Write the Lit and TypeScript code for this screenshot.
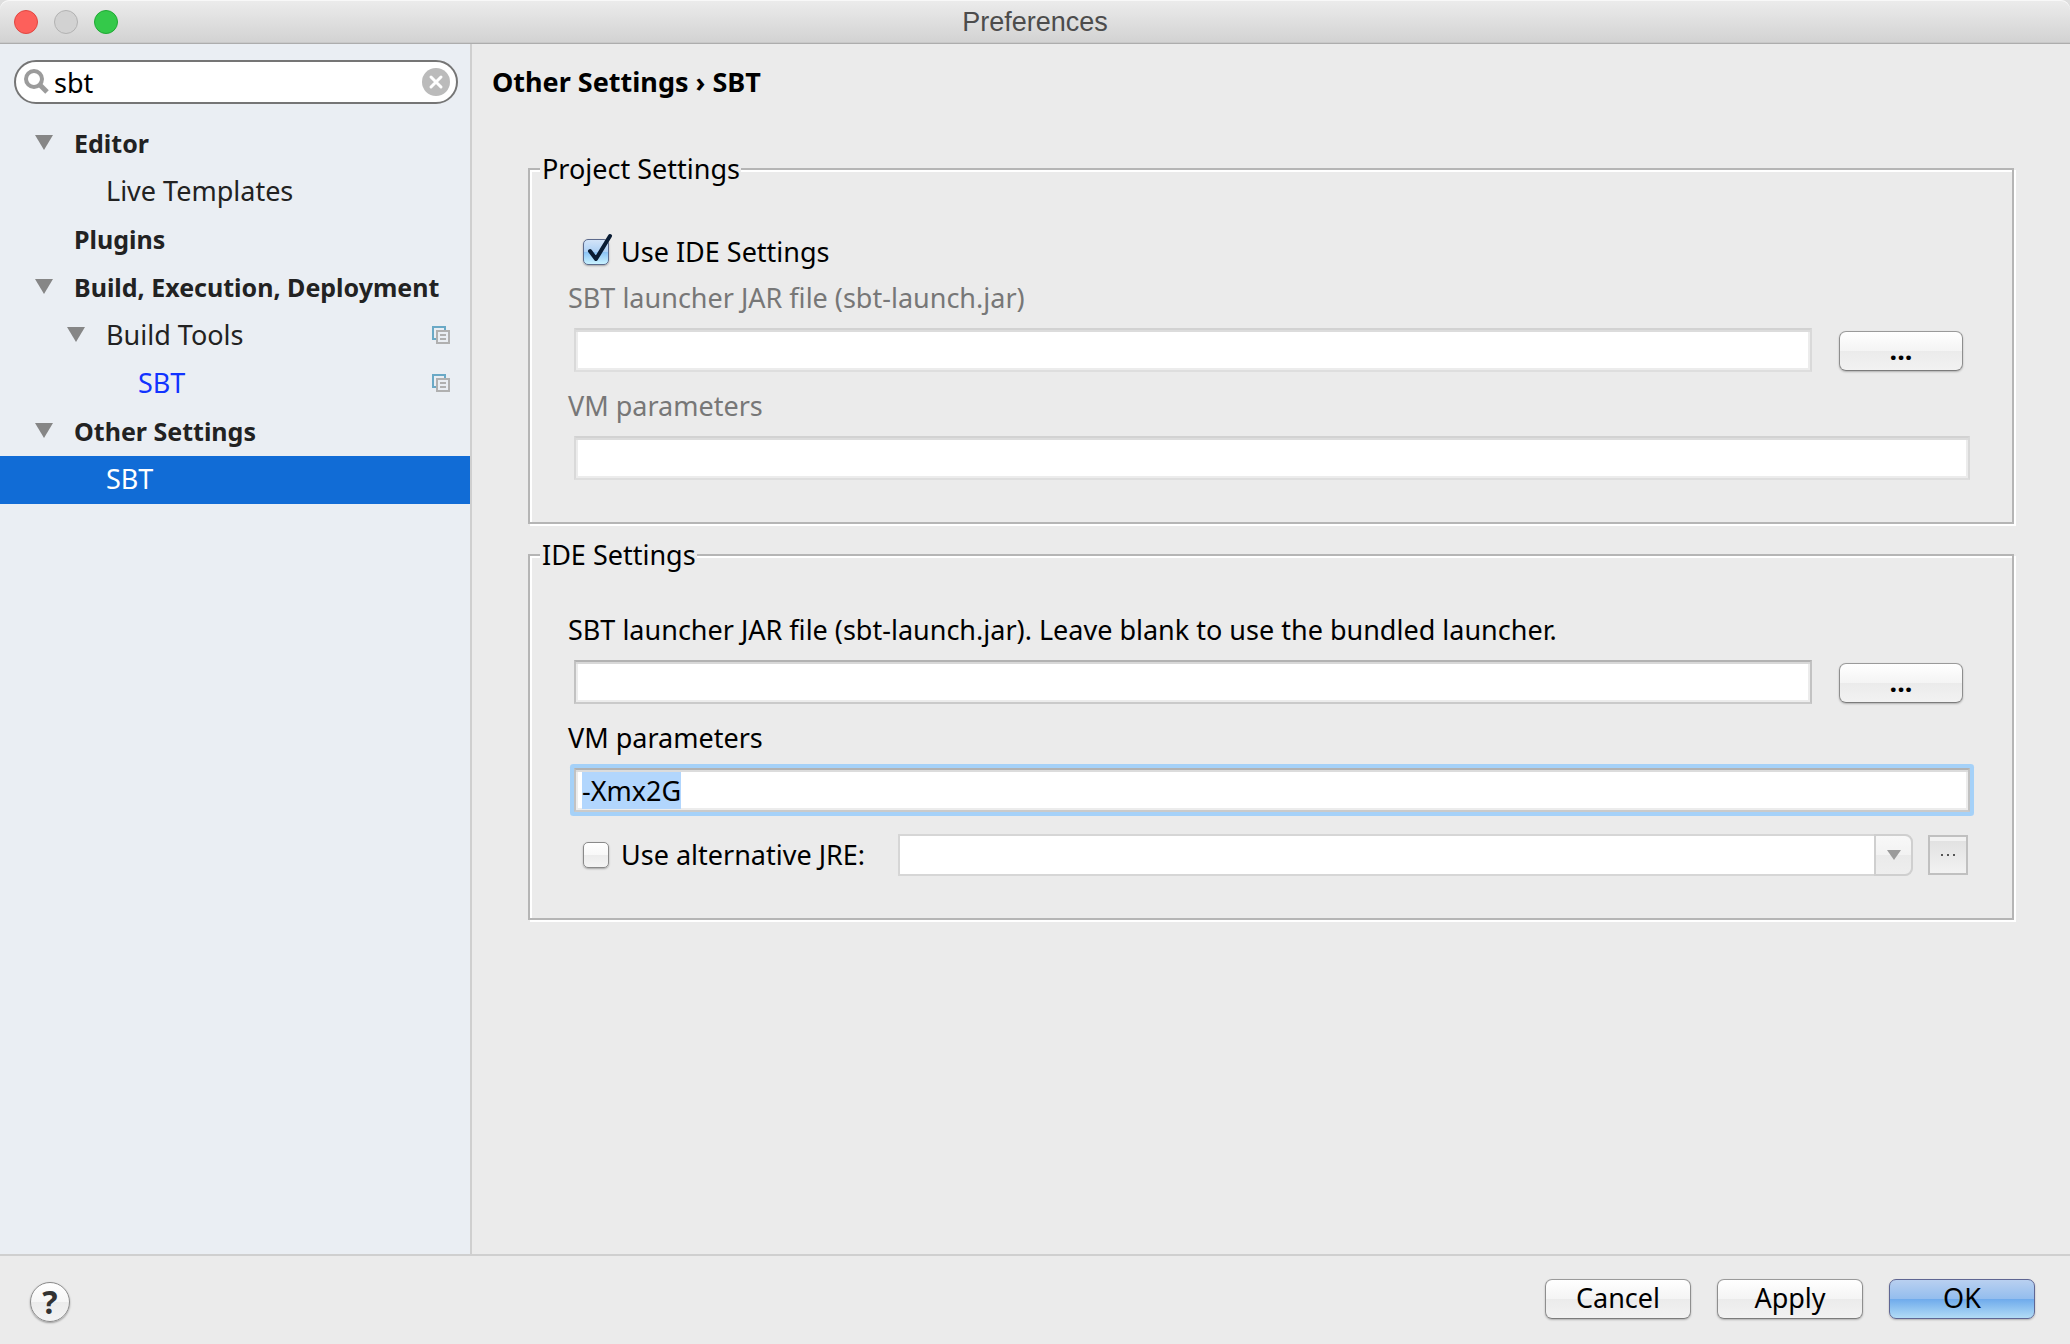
import { LitElement, html, css, nothing } from "lit";
import { customElement, query, state } from "lit/decorators.js";
import { classMap } from "lit/directives/class-map.js";

interface TreeRow {
  id: string;
  label: string;
  level: 0 | 1 | 2;
  expandable?: boolean;
  group?: boolean;
  match?: boolean;
  shared?: boolean;
}

const ROWS: TreeRow[] = [
  { id: "editor", label: "Editor", level: 0, expandable: true, group: true },
  { id: "templates", label: "Live Templates", level: 1 },
  { id: "plugins", label: "Plugins", level: 0, group: true },
  { id: "build", label: "Build, Execution, Deployment", level: 0, expandable: true, group: true },
  { id: "tools", label: "Build Tools", level: 1, expandable: true, shared: true },
  { id: "tools-sbt", label: "SBT", level: 2, match: true, shared: true },
  { id: "other", label: "Other Settings", level: 0, expandable: true, group: true },
  { id: "other-sbt", label: "SBT", level: 1 },
];

const arrow = html`<svg width="18" height="15" viewBox="0 0 18 15" aria-hidden="true">
  <path d="M0 0h18L9 15z" fill="#868686" />
</svg>`;

const copies = html`<svg width="18" height="18" viewBox="0 0 18 18" fill="none" stroke-width="2" aria-hidden="true">
  <path d="M4 13H1V1h12v3" stroke="#6aa9c6" />
  <path d="M5 5h12v12H5z" stroke="#b0b0b0" />
  <path d="M8 9h6M8 13h6" stroke="#b0b0b0" />
</svg>`;

@customElement("app-root")
export class AppRoot extends LitElement {
  @state() private selected = "other-sbt";
  @state() private useIde = true;
  @state() private useJre = false;
  @query("#ide-vm") private vmField!: HTMLInputElement;

  static styles = css`
    :host {
      display: flex;
      flex-direction: column;
      min-height: 100vh;
      background: #ebebeb;
      color: #000;
      font: 27px/32px "Noto Sans", "Open Sans", sans-serif;
    }
    * {
      box-sizing: border-box;
    }
    button,
    input,
    select {
      font: inherit;
      color: inherit;
      margin: 0;
      outline: none;
    }
    .titleframe {
      background: #dedede;
    }
    .titlebar {
      display: grid;
      grid-template-columns: 1fr auto 1fr;
      align-items: center;
      height: 44px;
      padding: 1px 14px 0;
      border-bottom: 1px solid #adadad;
      border-radius: 9px 9px 0 0;
      background: linear-gradient(#ececec, #d2d2d2);
      box-shadow: inset 0 1px #f8f8f8, inset 0 -1px #c8c8c8;
    }
    .lights {
      display: flex;
      gap: 16px;
    }
    .light {
      width: 24px;
      height: 24px;
      padding: 0;
      border: 1px solid;
      border-radius: 50%;
    }
    .close {
      background: #fd605b;
      border-color: #e14640;
    }
    .minimize {
      background: #d2d2d2;
      border-color: #b2b2b2;
    }
    .zoom {
      background: #34c94a;
      border-color: #1fa934;
    }
    h1 {
      margin: 0;
      font: 27px/32px "Liberation Sans", Arial, sans-serif;
      color: #4c4c4c;
    }
    .body {
      flex: 1;
      display: flex;
    }
    aside {
      width: 472px;
      flex: none;
      border-right: 2px solid #cfcfcf;
      background: #eaeef3;
    }
    .search {
      display: flex;
      align-items: center;
      height: 44px;
      margin: 16px 12px 16px 14px;
      padding: 0 6px 0 8px;
      border: 2px solid #757575;
      border-radius: 22px;
      background: #fff;
    }
    .search input {
      flex: 1;
      min-width: 0;
      height: 40px;
      padding: 0 0 0 4px;
      border: 0;
      background: none;
    }
    .clear {
      display: flex;
      padding: 0;
      border: 0;
      background: none;
    }
    ul {
      list-style: none;
      margin: 0;
      padding: 0;
    }
    .row {
      display: flex;
      align-items: center;
      width: 100%;
      height: 48px;
      padding: 0 20px 3px 35px;
      border: 0;
      background: none;
      color: #222;
      text-align: left;
    }
    .level1 {
      padding-left: 67px;
    }
    .level2 {
      padding-left: 99px;
    }
    .group {
      font-size: 25px;
      font-weight: 700;
    }
    .match {
      color: #1233ff;
    }
    .selected {
      background: #116cd6;
      color: #fff;
    }
    .twist {
      display: flex;
      flex: none;
      width: 39px;
    }
    .name {
      flex: 1;
      white-space: nowrap;
    }
    main {
      flex: 1;
      min-width: 0;
      padding: 22px 56px 40px 20px;
    }
    h2 {
      margin: 0 0 55px;
      font-size: 27px;
      font-weight: 700;
    }
    fieldset {
      min-width: 0;
      margin: 0 0 15px 36px;
      padding: 0 10px;
      border: 2px solid #b5b5b5;
      box-shadow: inset 2px 2px #fff, 2px 2px #fff;
    }
    legend {
      padding: 0 1px 0 2px;
      background: #ebebeb;
    }
    .group-body {
      display: flex;
      flex-direction: column;
      gap: 18px;
      padding: 43px 32px 42px 28px;
    }
    .group-body.project {
      padding-top: 51px;
    }
    .field {
      display: flex;
      flex-direction: column;
      gap: 14px;
    }
    .field.off label {
      color: #777;
    }
    .line {
      display: flex;
      align-items: center;
      gap: 27px;
      padding-left: 6px;
    }
    .line.browse {
      padding-right: 7px;
    }
    .text {
      flex: 1;
      min-width: 0;
      height: 44px;
      padding: 0 6px;
      border: 2px solid;
      border-color: #b2b2b2 #c2c2c2 #cacaca;
      border-radius: 0;
      background: #fff;
      background-clip: padding-box;
      box-shadow: inset 0 2px #d8d8d8, inset 2px -2px #ececec, inset -2px 0 #ececec;
    }
    .text:disabled {
      border-color: #d2d2d2 #d9d9d9 #dedede;
      box-shadow: inset 0 2px #dcdcdc, inset 2px -2px #ececec, inset -2px 0 #ececec;
    }
    .text.focus {
      border-radius: 1px;
      box-shadow: 0 0 0 4px #a5d1f8, inset 0 2px #dcdcdc, inset 2px -2px #ececec, inset -2px 0 #ececec;
    }
    .text::selection {
      background: #b2d6fd;
      color: #000;
    }
    .check {
      display: flex;
      align-items: center;
      gap: 12px;
      padding-left: 15px;
    }
    .check.switch {
      margin-bottom: -4px;
    }
    .tick {
      position: relative;
      display: flex;
    }
    .tick input {
      appearance: none;
      width: 26px;
      height: 26px;
      border: 1px solid #8a8a8a;
      border-radius: 5px;
      background: linear-gradient(#fff, #f8f8f8 50%, #ececec 50%, #f4f4f4);
      box-shadow: 0 1px 2px #0000004d;
    }
    .tick input:checked {
      border-color: #5c6a8c;
      background: linear-gradient(#d3e4f8, #acd0f5 50%, #8ac2f5 50%, #c9f2ff);
    }
    .tick svg {
      position: absolute;
      left: 0;
      bottom: 0;
      pointer-events: none;
    }
    .push {
      height: 40px;
      padding: 0 0 2px;
      border: 1px solid;
      border-color: #9a9a9a #8e8e8e #7c7c7c;
      border-radius: 7px;
      background: linear-gradient(#fff, #f4f4f4 50%, #ebebeb 50%, #f2f2f2);
      box-shadow: 0 1px 2px #00000040;
    }
    .browse .push {
      width: 124px;
      margin-top: 2px;
      font-weight: 700;
    }
    .jre {
      display: flex;
      align-items: center;
      height: 42px;
      margin-top: 4px;
      padding-right: 2px;
    }
    .combo {
      position: relative;
      flex: 1;
      display: flex;
      margin: 0 15px 0 33px;
    }
    .combo select {
      appearance: none;
      width: 100%;
      height: 42px;
      border: 2px solid #d6d6d6;
      border-radius: 0 9px 9px 0;
      background: #fff;
      opacity: 1;
    }
    .drop {
      position: absolute;
      top: 0;
      right: 0;
      display: flex;
      align-items: center;
      justify-content: center;
      width: 39px;
      height: 42px;
      border: 2px solid #cfcfcf;
      border-radius: 0 8px 8px 0;
      background: linear-gradient(#f8f8f8, #f2f2f2 50%, #eaeaea 50%, #eee);
      pointer-events: none;
    }
    .more {
      display: flex;
      align-items: center;
      justify-content: center;
      width: 40px;
      height: 40px;
      padding: 0;
      border: 2px solid #c0c0c0;
      background: linear-gradient(#f2f2f2 10%, #e2e2e2 12%, #f2f2f2);
    }
    footer {
      display: flex;
      align-items: flex-start;
      gap: 26px;
      height: 90px;
      padding: 23px 35px 0 30px;
      border-top: 2px solid #cfcfcf;
    }
    .help {
      width: 40px;
      height: 40px;
      margin: 3px auto 0 0;
      padding: 0;
      border: 1px solid #8a8a8a;
      border-radius: 50%;
      background: linear-gradient(#fff, #f6f6f6 50%, #ebebeb 50%, #f4f4f4);
      box-shadow: 0 1px 2px #00000059;
      color: #333;
      font-size: 32px;
      font-weight: 700;
    }
    footer .push {
      width: 146px;
    }
    footer .primary {
      border-color: #5f6693;
      background: linear-gradient(#b9d0f0, #93bdee 50%, #6eaaec 50%, #b2dcf5);
    }
  `;

  firstUpdated() {
    this.vmField.focus();
    this.vmField.select();
  }

  private row(r: TreeRow) {
    const classes = {
      row: true,
      level1: r.level === 1,
      level2: r.level === 2,
      group: !!r.group,
      match: !!r.match,
      selected: r.id === this.selected,
    };
    return html`<li>
      <button class=${classMap(classes)} @click=${() => (this.selected = r.id)}>
        <span class="twist">${r.expandable ? arrow : nothing}</span>
        <span class="name">${r.label}</span>
        ${r.shared ? copies : nothing}
      </button>
    </li>`;
  }

  private checkbox(id: string, label: string, on: boolean, set: (v: boolean) => void) {
    return html`<span class="tick">
        <input id=${id} type="checkbox" .checked=${on}
          @change=${(e: Event) => set((e.target as HTMLInputElement).checked)} />
        ${on
          ? html`<svg width="32" height="32" viewBox="0 0 32 32" aria-hidden="true">
              <path d="M7 18l6 8L27 3" fill="none" stroke="#0a1c33" stroke-width="4" stroke-linecap="round" stroke-linejoin="round" />
            </svg>`
          : nothing}
      </span>
      <label for=${id}>${label}</label>`;
  }

  render() {
    return html`
      <div class="titleframe">
        <header class="titlebar">
          <div class="lights">
            <button class="light close" aria-label="Close"></button>
            <button class="light minimize" aria-label="Minimize" disabled></button>
            <button class="light zoom" aria-label="Zoom"></button>
          </div>
          <h1>Preferences</h1>
        </header>
      </div>

      <div class="body">
        <aside>
          <div class="search">
            <svg width="26" height="26" viewBox="0 0 26 26" fill="none" stroke="#9b9b9b" aria-hidden="true">
              <circle cx="10" cy="10" r="8" stroke-width="4" />
              <path d="M15 15l8 8" stroke-width="5" />
            </svg>
            <input type="text" aria-label="Search settings" .value=${"sbt"} />
            <button class="clear" aria-label="Clear search">
              <svg width="28" height="28" viewBox="0 0 28 28" aria-hidden="true">
                <circle cx="14" cy="14" r="14" fill="#bbb" />
                <path d="M9 9l10 10M19 9L9 19" stroke="#fff" stroke-width="3" stroke-linecap="round" />
              </svg>
            </button>
          </div>
          <nav aria-label="Settings"><ul>${ROWS.map((r) => this.row(r))}</ul></nav>
        </aside>

        <main>
          <h2>Other Settings › SBT</h2>

          <fieldset>
            <legend>Project Settings</legend>
            <div class="group-body project">
              <div class="check switch">
                ${this.checkbox("use-ide", "Use IDE Settings", this.useIde, (v) => (this.useIde = v))}
              </div>
              <div class=${classMap({ field: true, off: this.useIde })}>
                <label for="project-jar">SBT launcher JAR file (sbt-launch.jar)</label>
                <div class="line browse">
                  <input id="project-jar" class="text" type="text" ?disabled=${this.useIde} />
                  <button class="push" aria-label="Browse for launcher">...</button>
                </div>
              </div>
              <div class=${classMap({ field: true, off: this.useIde })}>
                <label for="project-vm">VM parameters</label>
                <div class="line">
                  <input id="project-vm" class="text" type="text" ?disabled=${this.useIde} />
                </div>
              </div>
            </div>
          </fieldset>

          <fieldset>
            <legend>IDE Settings</legend>
            <div class="group-body">
              <div class="field">
                <label for="ide-jar">SBT launcher JAR file (sbt-launch.jar). Leave blank to use the bundled launcher.</label>
                <div class="line browse">
                  <input id="ide-jar" class="text" type="text" />
                  <button class="push" aria-label="Browse for launcher">...</button>
                </div>
              </div>
              <div class="field">
                <label for="ide-vm">VM parameters</label>
                <div class="line">
                  <input id="ide-vm" class="text focus" type="text" .value=${"-Xmx2G"} />
                </div>
              </div>
              <div class="jre">
                <div class="check">
                  ${this.checkbox("use-jre", "Use alternative JRE:", this.useJre, (v) => (this.useJre = v))}
                </div>
                <div class="combo">
                  <select aria-label="Alternative JRE" ?disabled=${!this.useJre}></select>
                  <span class="drop">
                    <svg width="14" height="10" viewBox="0 0 14 10" aria-hidden="true"><path d="M0 0h14L7 10z" fill="#9b9b9b" /></svg>
                  </span>
                </div>
                <button class="more" aria-label="Browse for JRE" ?disabled=${!this.useJre}>
                  <svg width="14" height="2" viewBox="0 0 14 2" fill="#555" aria-hidden="true">
                    <path d="M0 0h2v2H0zM6 0h2v2H6zM12 0h2v2h-2z" />
                  </svg>
                </button>
              </div>
            </div>
          </fieldset>
        </main>
      </div>

      <footer>
        <button class="help" aria-label="Help">?</button>
        <button class="push">Cancel</button>
        <button class="push">Apply</button>
        <button class="push primary">OK</button>
      </footer>
    `;
  }
}
